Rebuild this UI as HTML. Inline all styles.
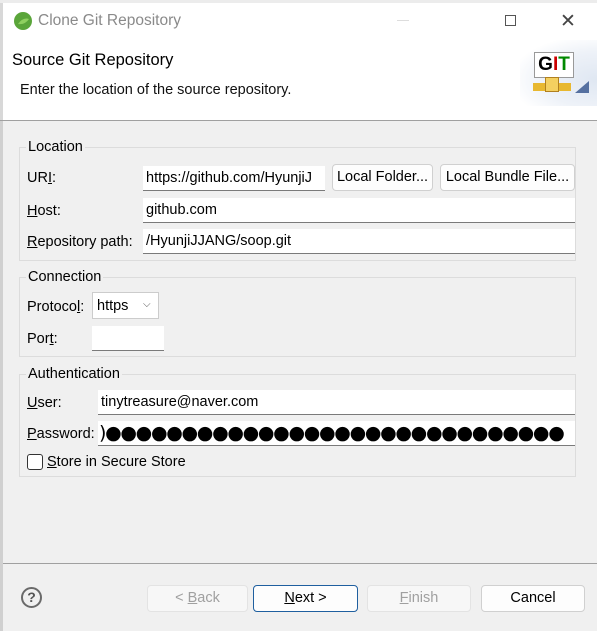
<!DOCTYPE html>
<html><head><style>
*{box-sizing:border-box;margin:0;padding:0}
body{width:597px;height:631px;overflow:hidden;background:#f0f0f0;font-family:"Liberation Sans",sans-serif;font-size:14.5px;color:#000;position:relative}
.a{position:absolute;white-space:nowrap}
.f{position:absolute;background:#fff;border-bottom:1px solid #7a7a7a;padding:3px 3px;height:25px;line-height:19px;overflow:hidden;white-space:nowrap}
.b{position:absolute;background:#fdfdfd;border:1px solid #d0d0d0;border-radius:4px;text-align:center;line-height:25px;height:27px}
.g{position:absolute;border:1px solid #dcdcdc}
.gl{position:absolute;background:#f0f0f0;padding:0 2px;line-height:16px}
u{text-decoration:underline}
</style></head><body>
<div class="a" style="left:0;top:0;width:597px;height:120px;background:#fff;border-left:3px solid #d8d8d8"></div>
<div class="a" style="left:0;top:0;width:597px;height:3px;background:#ececec"></div>
<svg class="a" style="left:13px;top:11px" width="20" height="20"><circle cx="10" cy="10" r="9" fill="#5aa53a"/><path d="M5 13 Q10 6 16 8 Q12 14 5 13Z" fill="#8fd060"/></svg>
<div class="a" style="left:38px;top:12px;font-size:15.5px;color:#8a8a8a">Clone Git Repository</div>
<div class="a" style="left:397px;top:20px;width:12px;height:1px;background:#ddd"></div>
<div class="a" style="left:505px;top:15px;width:11px;height:11px;border:1px solid #555"></div>
<div class="a" style="left:560px;top:10px;font-size:19px;color:#444">✕</div>
<div class="a" style="left:12px;top:51px;font-size:16.5px">Source Git Repository</div>
<div class="a" style="left:20px;top:82px;font-size:14.5px;color:#111">Enter the location of the source repository.</div>
<div class="a" style="left:520px;top:40px;width:77px;height:66px;background:radial-gradient(ellipse at 100% 60%,#dfe7f2 0%,#eef2f8 50%,#fff 80%)"></div>
<div class="a" style="left:534px;top:52px;width:40px;height:26px;background:#fff;border:1px solid #999;font:bold 19px 'Liberation Sans';line-height:24px;text-align:center"><span style="color:#000">G</span><span style="color:#c00">I</span><span style="color:#080">T</span></div>
<div class="a" style="left:533px;top:83px;width:38px;height:8px;background:#e8b830"></div>
<div class="a" style="left:545px;top:77px;width:14px;height:15px;background:#f4d060;border:1px solid #b08020"></div>
<svg class="a" style="left:575px;top:81px" width="14" height="12"><path d="M0 12 L14 12 L14 0Z" fill="#5570a0"/></svg>
<div class="a" style="left:0;top:120px;width:597px;height:1px;background:#a0a0a0"></div>
<div class="a" style="left:0;top:121px;width:3px;height:510px;background:#d0d0d0"></div>

<div class="g" style="left:19px;top:147px;width:557px;height:114px"></div>
<div class="gl" style="left:26px;top:139px">Location</div>
<div class="a" style="left:27px;top:170px">UR<u>I</u>:</div>
<div class="f" style="left:143px;top:166px;width:182px">https://github.com/HyunjiJ</div>
<div class="b" style="left:332px;top:164px;width:101px">Local Folder...</div>
<div class="b" style="left:440px;top:164px;width:135px">Local Bundle File...</div>
<div class="a" style="left:27px;top:203px"><u>H</u>ost:</div>
<div class="f" style="left:143px;top:198px;width:432px">github.com</div>
<div class="a" style="left:27px;top:234px"><u>R</u>epository path:</div>
<div class="f" style="left:143px;top:229px;width:432px">/HyunjiJJANG/soop.git</div>

<div class="g" style="left:19px;top:277px;width:557px;height:80px"></div>
<div class="gl" style="left:26px;top:269px">Connection</div>
<div class="a" style="left:27px;top:299px">Protoco<u>l</u>:</div>
<div class="a" style="left:92px;top:292px;width:67px;height:27px;background:#fff;border:1px solid #ccc;padding:5px 4px;line-height:16px">https<span style="position:absolute;left:50px;top:4px;font-size:10px;color:#555">⌵</span></div>
<div class="a" style="left:27px;top:331px">Por<u>t</u>:</div>
<div class="f" style="left:92px;top:326px;width:72px"></div>

<div class="g" style="left:19px;top:374px;width:557px;height:103px"></div>
<div class="gl" style="left:26px;top:366px">Authentication</div>
<div class="a" style="left:27px;top:395px"><u>U</u>ser:</div>
<div class="f" style="left:98px;top:390px;width:477px">tinytreasure@naver.com</div>
<div class="a" style="left:27px;top:426px"><u>P</u>assword:</div>
<div class="f" style="left:98px;top:421px;width:477px;font-size:19px;letter-spacing:-1.3px;padding:0 0 0 1px;line-height:24px;font-family:'DejaVu Sans',sans-serif">)●●●●●●●●●●●●●●●●●●●●●●●●●●●●●●</div>
<div class="a" style="left:27px;top:454px;width:16px;height:16px;border:1px solid #333;border-radius:3px;background:#fff"></div>
<div class="a" style="left:47px;top:454px"><u>S</u>tore in Secure Store</div>

<div class="a" style="left:3px;top:563px;width:594px;height:1px;background:#a0a0a0"></div>
<div class="a" style="left:21px;top:587px;width:21px;height:21px;border:2px solid #6a6a6a;border-radius:50%;text-align:center;font-weight:bold;color:#555;line-height:17px;font-size:14px">?</div>
<div class="b" style="left:147px;top:585px;width:101px;background:#f7f7f7;border-color:#e3e3e3;color:#a0a0a0">&lt; <u>B</u>ack</div>
<div class="b" style="left:253px;top:585px;width:105px;border:1px solid #1f5f9f"><u>N</u>ext &gt;</div>
<div class="b" style="left:367px;top:585px;width:104px;background:#f7f7f7;border-color:#e3e3e3;color:#a0a0a0"><u>F</u>inish</div>
<div class="b" style="left:481px;top:585px;width:104px">Cancel</div>
</body></html>
